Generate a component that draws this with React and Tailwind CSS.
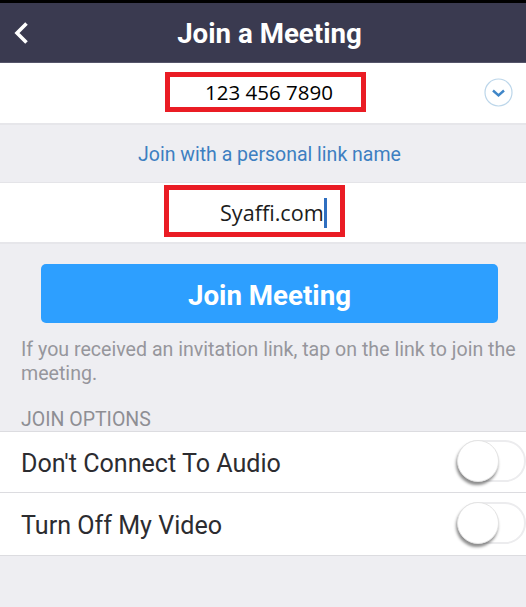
const Toggle = () => (
  <div className="relative w-[69px] h-[42px] rounded-full border-2 border-[#ececee] bg-white -mt-[3px]">
    <div className="absolute -left-[2px] -top-[2px] w-[42px] h-[42px] rounded-full bg-white border border-[#e4e4e4] shadow-[-1px_3px_3px_rgba(0,0,0,0.45)]" />
  </div>
);

const App = () => {
  return (
    <div className="w-[526px] h-[607px] bg-[#eeeef2] overflow-hidden font-['Roboto',sans-serif]">
      <div className="h-[3px] bg-black" />
      <div className="h-[60px] bg-[#3a3a50] flex items-center justify-center relative border-b border-[#55556a]">
        <svg className="absolute left-[13px] top-[18px]" width="16" height="24" viewBox="0 0 16 24" fill="none">
          <path d="M13.500 2.500 4 12l9.500 9.500" stroke="#ffffff" strokeWidth="3.6" />
        </svg>
        <h1 className="text-[27.700px] font-bold text-white ml-[13px] mt-[2px]">Join a Meeting</h1>
      </div>

      <div className="h-[62px] bg-white border-b-2 border-[#e6e6ea] relative flex items-center pl-[165px]">
        <div className="w-[201px] h-[40px] border-[5px] border-[#ea1c24] flex items-center justify-center -mt-[3px]">
          <span className="font-['Open_Sans',sans-serif] text-[20.500px] text-black ml-[7px] mt-[1px]">123 456 7890</span>
        </div>
        <svg className="absolute left-[484px] top-[15px]" width="29" height="29" viewBox="0 0 29 29" fill="none">
          <circle cx="14.500" cy="14.500" r="13.500" stroke="#bcd6ea" strokeWidth="1.2" />
          <path d="M9 12.500l5.500 5 5.500-5" stroke="#3f86c8" strokeWidth="2.400" />
        </svg>
      </div>

      <div className="h-[58px] flex items-center justify-center border-b border-[#e4e4e8]">
        <span className="text-[19.500px] text-[#3d7fc1] mt-[3px] ml-[13px]">Join with a personal link name</span>
      </div>

      <div className="h-[61px] bg-white border-b-2 border-[#e6e6ea] flex items-center pl-[164px]">
        <div className="w-[181px] h-[52px] border-[5px] border-[#ea1c24] flex items-center pl-[51px] -mt-[3px]">
          <span className="font-['Open_Sans',sans-serif] text-[21.600px] text-[#1c1c1c] mt-[5px]">Syaffi.com</span>
          <span className="w-[3px] h-[30px] bg-[#2f6fc0] mt-[4px]" />
        </div>
      </div>

      <div className="px-[41px] pt-[20px]">
        <button className="w-[457px] h-[59px] pt-[4px] rounded-[5px] bg-[#2d9fff] text-white text-[27.700px] font-bold">
          Join Meeting
        </button>
      </div>

      <p className="pl-[21px] pr-[4px] pt-[15px] text-[19.600px] leading-[24px] text-[#96969c]">
        If you received an invitation link, tap on the link to join the meeting.
      </p>

      <div className="pl-[21px] pt-[22px] text-[19.500px] leading-[23px] text-[#8e8e94]">JOIN OPTIONS</div>

      <div className="bg-white border-y border-[#dcdce0]">
        <div className="h-[61px] flex items-center justify-between pl-[21px] border-b border-[#dcdce0]">
          <span className="text-[25.100px] text-[#2c2c30] mt-[3px]">Don't Connect To Audio</span>
          <Toggle />
        </div>
        <div className="h-[62px] flex items-center justify-between pl-[21px]">
          <span className="text-[25.100px] text-[#2c2c30] mt-[3px]">Turn Off My Video</span>
          <Toggle />
        </div>
      </div>
    </div>
  );
};

export default App;
